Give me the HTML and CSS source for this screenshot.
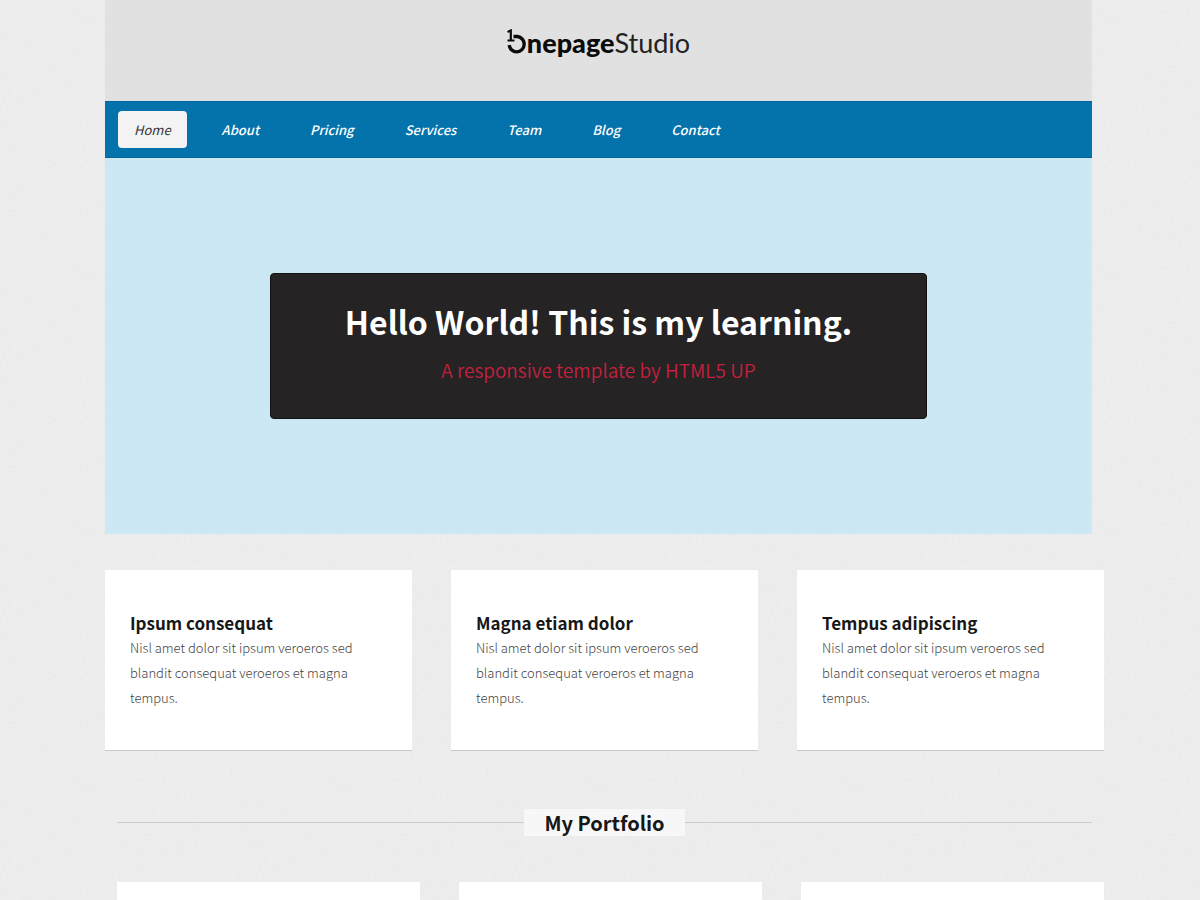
FILE: index.html
```html
<!DOCTYPE html>
<html lang="en">
<head>
<meta charset="utf-8">
<meta name="viewport" content="width=device-width, initial-scale=1">
<title>Onepage Studio</title>
<link rel="stylesheet" href="styles.css">
</head>
<body>
<div class="page">
  <header class="masthead">
    <a class="logo" href="#">
      <svg class="logo-mark" viewBox="0 0 20 25" aria-hidden="true">
        <path d="M.5 3 3.800 1.500V12M.5 11.500H7.500" fill="none" stroke="#0b0b0b" stroke-width="2.200"/>
        <path d="M6.500 7.500H10.500a7.500 7.700 0 1 1-8.300 8.500" fill="none" stroke="#0b0b0b" stroke-width="3.400"/>
      </svg><span class="logo-bold">nepage</span><span class="logo-light">Studio</span>
    </a>
  </header>
  <nav class="nav">
    <a class="nav-link active" href="#">Home</a>
    <a class="nav-link" href="#">About</a>
    <a class="nav-link" href="#">Pricing</a>
    <a class="nav-link" href="#">Services</a>
    <a class="nav-link" href="#">Team</a>
    <a class="nav-link" href="#">Blog</a>
    <a class="nav-link" href="#">Contact</a>
  </nav>
  <section class="hero">
    <div class="hero-box">
      <h1>Hello World! This is my learning.</h1>
      <p>A responsive template by HTML5 UP</p>
    </div>
  </section>
  <section class="features">
    <article class="card">
      <h2>Ipsum consequat</h2>
      <p>Nisl amet dolor sit ipsum veroeros sed blandit consequat veroeros et magna tempus.</p>
    </article>
    <article class="card">
      <h2>Magna etiam dolor</h2>
      <p>Nisl amet dolor sit ipsum veroeros sed blandit consequat veroeros et magna tempus.</p>
    </article>
    <article class="card">
      <h2>Tempus adipiscing</h2>
      <p>Nisl amet dolor sit ipsum veroeros sed blandit consequat veroeros et magna tempus.</p>
    </article>
  </section>
  <section class="portfolio">
    <div class="divider"><h2>My Portfolio</h2></div>
    <div class="works">
      <article class="work"></article>
      <article class="work"></article>
      <article class="work"></article>
    </div>
  </section>
</div>
</body>
</html>
```
FILE: styles.css
```css
* { box-sizing: border-box; }
html { overflow-x: hidden; }
body {
  margin: 0;
  background-color: #eeeeef;
  background-image: url("data:image/svg+xml,%3Csvg xmlns='http://www.w3.org/2000/svg' width='256' height='256'%3E%3Cfilter id='n'%3E%3CfeTurbulence type='fractalNoise' baseFrequency='.35' numOctaves='2' stitchTiles='stitch'/%3E%3CfeColorMatrix type='saturate' values='0'/%3E%3C/filter%3E%3Crect width='256' height='256' filter='url(%23n)' opacity='.08'/%3E%3C/svg%3E");
  font-family: "Noto Sans CJK SC", "Open Sans", sans-serif;
  color: #171717;
}
h1, h2, p { margin: 0; }
.page { padding: 0 9% 0 8.75%; }

.masthead {
  display: flex;
  justify-content: center;
  padding: 28px 0 43px;
  background: #e1e1e1;
}
.logo {
  display: flex;
  align-items: flex-start;
  height: 30px;
  color: #0b0b0b;
  font-family: Lato, sans-serif;
  font-size: 27px;
  line-height: 30px;
  text-decoration: none;
}
.logo-mark { width: 20px; height: 25px; margin-top: 1px; }
.logo-bold { font-weight: 900; }
.logo-light { font-weight: 400; color: #222; }

.nav {
  display: flex;
  flex-wrap: wrap;
  gap: 19px;
  padding: 10px 13px;
  background: #0473ab;
  box-shadow: inset 0 1px #03639a, inset 0 -1px #03639a;
}
.nav-link {
  padding: 0 16px;
  border-radius: 4px;
  color: #fff;
  font-size: 13px;
  font-style: italic;
  font-weight: 500;
  line-height: 37px;
  text-decoration: none;
}
.nav-link.active { background: #f3f3f3; color: #333; font-weight: 400; }

.hero { padding: 115px 165px; background: #cce8f4; }
.hero-box {
  padding: 22px 20px 29px;
  border: 1px solid #111;
  border-radius: 4px;
  background: #252323;
  text-align: center;
}
.hero-box h1 { margin-bottom: 5px; color: #fff; font-size: 32px; font-weight: 700; line-height: 50px; }
.hero-box p { color: #c4213f; font-size: 19px; font-weight: 350; line-height: 38px; }

.features {
  display: grid;
  grid-template-columns: repeat(3, 1fr);
  gap: 39px;
  margin: 36px -12px 0 0;
}
.card {
  padding: 40px 25px;
  border-bottom: 1px solid #c8c8c8;
  background: #fff;
}
.card h2 { font-size: 17px; font-weight: 700; line-height: 25px; }
.card p { color: #444; font-size: 13px; font-weight: 300; line-height: 25px; }

.portfolio { margin: 58px 0 0 12px; }
.divider { display: flex; align-items: center; }
.divider::before, .divider::after { content: ""; flex: 1; height: 1px; background: #ccc; }
.divider h2 {
  padding: 0 20px;
  background: #f7f7f7;
  font-size: 20px;
  font-weight: 700;
  line-height: 27px;
}
.works {
  display: grid;
  grid-template-columns: repeat(3, 1fr);
  gap: 39px;
  margin: 46px -12px 0 0;
}
.work { min-height: 18px; background: #fff; }
```
